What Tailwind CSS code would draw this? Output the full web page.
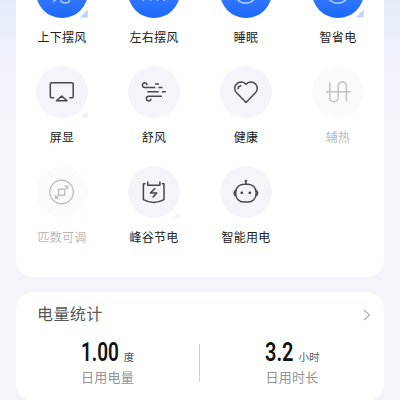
<!DOCTYPE html>
<html lang="zh-CN">
<head>
<meta charset="utf-8">
<title>空调控制</title>
<script src="https://cdn.jsdelivr.net/npm/@tailwindcss/browser@4"></script>
</head>
<body class="h-[400px] w-[400px] overflow-hidden bg-linear-to-b from-[#e4ecfa] via-[#f0f3fa] via-15% to-[#f3f5fa] to-35% font-['Noto_Sans_CJK_SC',sans-serif] text-[#202124]">
<main class="flex h-[400px] flex-col gap-[15px] overflow-hidden px-4">
  <section class="h-[276.5px] w-[368px] shrink-0 rounded-b-[18px] bg-white">
    <div class="-mt-[34px] grid w-[368px] grid-cols-4 auto-rows-[100.2px] text-[12px] leading-[18px] tracking-[0.3px]">
      <div class="flex flex-col items-center">
        <div class="relative"><div class="size-[51.5px] rounded-full bg-linear-to-b from-[#4b8dff] to-[#1d68fb]">
          <svg class="size-[52px]" viewBox="0 0 52 52" fill="none" stroke="#b9d3ff" stroke-width="1.3" stroke-linecap="round"><path d="M19.500 34l-2 1.500M25 32.500c-1 3.500 1 4.500 4.500 4.500s4.500-1.500 3.500-4.500"/></svg></div>
          <i class="absolute right-0 bottom-0 size-2 bg-[#b9d2f8] [clip-path:polygon(100%_0,100%_100%,0_100%)]"></i></div>
        <span class="mt-[10px]">上下摆风</span>
      </div>
      <div class="flex flex-col items-center">
        <div class="size-[51.5px] rounded-full bg-linear-to-b from-[#4b8dff] to-[#1d68fb]">
          <svg class="size-[52px]" viewBox="0 0 52 52" fill="none" stroke="#b9d3ff" stroke-width="1.2" stroke-linecap="round"><path d="M16 33l-.8 1.500M23 31v3.500M29.500 31v3.500M35.500 33l.8 1.500"/></svg></div>
        <span class="mt-[10px]">左右摆风</span>
      </div>
      <div class="flex flex-col items-center">
        <div class="size-[51.5px] rounded-full bg-linear-to-b from-[#4b8dff] to-[#1d68fb]">
          <svg class="size-[52px]" viewBox="0 0 52 52" fill="none" stroke="#b9d3ff" stroke-width="1.3"><circle cx="25.700" cy="26" r="11.200"/></svg></div>
        <span class="mt-[10px]">睡眠</span>
      </div>
      <div class="flex flex-col items-center">
        <div class="relative"><div class="size-[51.5px] rounded-full bg-linear-to-b from-[#4b8dff] to-[#1d68fb]">
          <svg class="size-[52px]" viewBox="0 0 52 52" fill="none" stroke="#b9d3ff" stroke-width="1.3"><circle cx="25.700" cy="26" r="11.200"/></svg></div>
          <i class="absolute right-0 bottom-0 size-2 bg-[#c3d8f7] [clip-path:polygon(100%_0,100%_100%,0_100%)]"></i></div>
        <span class="mt-[10px]">智省电</span>
      </div>

      <div class="flex flex-col items-center">
        <div class="relative"><div class="size-[51.5px] rounded-full bg-[#f3f5fa]">
          <svg class="size-[52px]" viewBox="0 0 52 52" fill="none" stroke="#45484e" stroke-width="1.5" stroke-linejoin="round"><path d="M18.200 31.700H15.500a1.200 1.200 0 0 1-1.200-1.200V17.900a1.200 1.200 0 0 1 1.200-1.200h20.500a1.200 1.200 0 0 1 1.200 1.200v12.600a1.200 1.200 0 0 1-1.200 1.200h-2.700M20.400 34.800l5.300-4.700 5.300 4.700z"/></svg></div>
          <i class="absolute right-0 bottom-0 size-[7px] bg-[#f1f3f7] [clip-path:polygon(100%_0,100%_100%,0_100%)]"></i></div>
        <span class="mt-[10px]">屏显</span>
      </div>
      <div class="flex flex-col items-center">
        <div class="size-[51.5px] rounded-full bg-[#f3f5fa]">
          <svg class="size-[52px]" viewBox="0 0 52 52" fill="none" stroke="#45484e" stroke-width="1.5"><path d="M19 19.200a2.300 2.300 0 1 0-2.300 2.200H27.300M27 18h4M30.500 21.500h4M19.300 25.700h11.500M34 25.700h3.800M34 30.300H20.700a2.300 2.300 0 1 0 2.300 2.500"/></svg></div>
        <span class="mt-[10px]">舒风</span>
      </div>
      <div class="flex flex-col items-center">
        <div class="size-[51.5px] rounded-full bg-[#f3f5fa]">
          <svg class="size-[52px]" viewBox="0 0 52 52" fill="none" stroke="#45484e" stroke-width="1.500" stroke-linejoin="round" stroke-linecap="round"><path d="M26 18.200c-2.300-2.700-6.900-2.900-9.500-.2-2.400 2.500-2.300 6.300.1 8.700L26 36.500l9.400-9.800c2.400-2.400 2.500-6.200.1-8.700-2.600-2.700-7.200-2.500-9.500.2zM18 22.700c.2-1.500 1.300-2.600 2.800-2.900"/></svg></div>
        <span class="mt-[10px]">健康</span>
      </div>
      <div class="flex flex-col items-center text-[#b9babd]">
        <div class="size-[51.5px] rounded-full bg-[#fafbfd]">
          <svg class="size-[52px]" viewBox="0 0 52 52" fill="none" stroke="#bfc1c4" stroke-width="1.500"><path d="M14 25.700h24.600M17.800 16.300v15.200a4.200 4.200 0 0 0 8.400 0V20a4.100 4.100 0 0 1 8.200 0v15.300"/></svg></div>
        <span class="mt-[10px]">辅热</span>
      </div>

      <div class="flex flex-col items-center text-[#b9babd]">
        <div class="relative"><div class="size-[51.5px] rounded-full bg-[#fafbfd]">
          <svg class="size-[52px]" viewBox="0 0 52 52" fill="none" stroke="#bfc1c4" stroke-width="1.400"><circle cx="25.600" cy="26" r="11.800"/><path d="M22.500 23.200h6.300v6.100h-6.300zM28.800 23.200l3-3M22.500 29.300l-3 3"/><path fill="#bfc1c4" stroke="none" d="M28 19.500h4.500V24zM18.800 28.500V33h4.500z"/></svg></div>
          <i class="absolute right-0 bottom-0 size-[7px] bg-[#fafbfc] [clip-path:polygon(100%_0,100%_100%,0_100%)]"></i></div>
        <span class="mt-[10px]">匹数可调</span>
      </div>
      <div class="flex flex-col items-center">
        <div class="relative"><div class="size-[51.5px] rounded-full bg-[#f3f5fa]">
          <svg class="size-[52px]" viewBox="0 0 52 52" fill="none" stroke="#45484e" stroke-width="1.500" stroke-linejoin="round"><path d="M17.600 17.800h-2.200v15.800q10.300 5.600 20.600 0V17.800h-2.200M19.700 15.500v3.700h12.200v-3.700M27.300 22.200l-4.800 4.700h6.300l-4.200 4.700"/></svg></div>
          <i class="absolute right-0 bottom-0 size-[7px] bg-[#f1f3f7] [clip-path:polygon(100%_0,100%_100%,0_100%)]"></i></div>
        <span class="mt-[10px]">峰谷节电</span>
      </div>
      <div class="flex flex-col items-center">
        <div class="size-[51.5px] rounded-full bg-[#f3f5fa]">
          <svg class="size-[52px]" viewBox="0 0 52 52" fill="none" stroke="#45484e" stroke-width="1.500"><rect x="15.700" y="18.200" width="20.400" height="17.800" rx="8"/><path d="M25.900 18.200V15.500M15.500 24.300q-2.600 2.900 0 5.800M36.300 24.300q2.600 2.900 0 5.800"/><g fill="#45484e" stroke="none"><circle cx="25.900" cy="15" r="1.300"/><circle cx="21.800" cy="26.800" r="1.400"/><circle cx="29.800" cy="26.800" r="1.400"/></g></svg></div>
        <span class="mt-[10px]">智能用电</span>
      </div>
    </div>
  </section>

  <section class="h-[109px] w-[368px] shrink-0 rounded-[18px] bg-white">
    <header class="flex h-[43px] items-center justify-between pr-[13.5px] pl-[21px]">
      <h2 class="text-[16px] leading-6 tracking-[0.4px] text-[#55575a]">电量统计</h2>
      <svg class="mt-[3px] h-3 w-2" viewBox="0 0 8 12" fill="none" stroke="#b4b5b8" stroke-width="1.400"><path d="M1 1l5.500 5L1 11"/></svg>
    </header>
    <div class="flex">
      <div class="w-[183px] text-center">
        <div class="flex h-[32px] items-baseline justify-center gap-[6px]">
          <div class="w-[37px] text-left font-[Roboto,sans-serif] text-[25px] leading-[36px] font-semibold text-[#111214]"><span class="inline-block origin-left scale-x-[0.76]">1.00</span></div>
          <span class="text-[10.5px] leading-4 text-[#55575a]">度</span>
        </div>
        <div class="text-[13px] leading-5 tracking-[0.3px] text-[#929396]">日用电量</div>
      </div>
      <div class="mt-[9px] h-[38px] w-px bg-[#cbccd0]"></div>
      <div class="w-[184px] text-center">
        <div class="flex h-[32px] items-baseline justify-center gap-[6px]">
          <div class="w-[28px] text-left font-[Roboto,sans-serif] text-[25px] leading-[36px] font-semibold text-[#111214]"><span class="inline-block origin-left scale-x-[0.8]">3.2</span></div>
          <span class="text-[10.5px] leading-4 text-[#55575a]">小时</span>
        </div>
        <div class="text-[13px] leading-5 tracking-[0.3px] text-[#929396]">日用时长</div>
      </div>
    </div>
  </section>
</main>
</body>
</html>
